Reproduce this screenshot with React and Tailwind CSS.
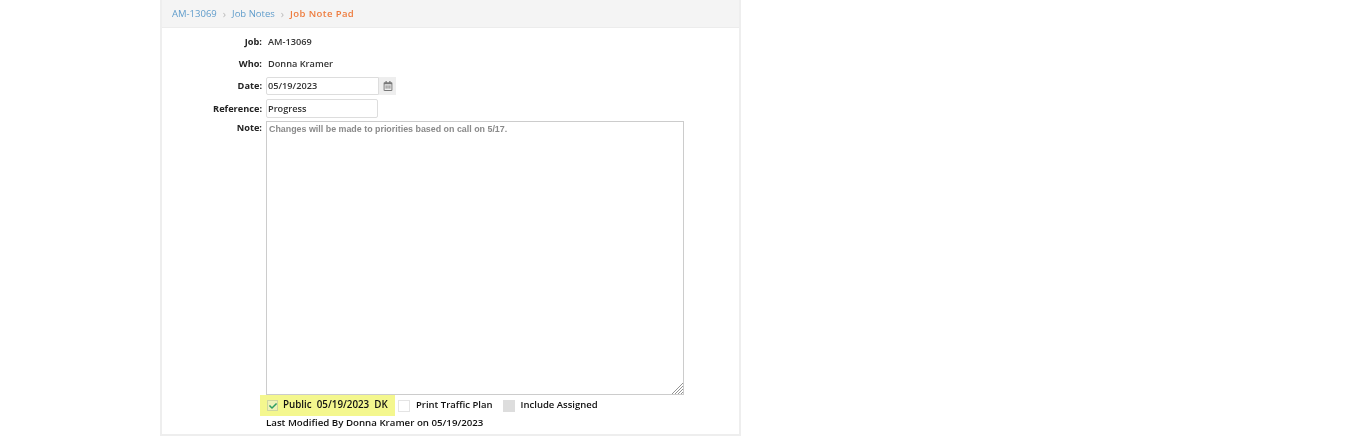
import { FaRegCalendarAlt, FaCheck } from 'react-icons/fa';

function Row({ label, children, className = '' }) {
  return (
    <div className={`flex items-center ${className}`}>
      <span className="w-[100px] shrink-0 text-right text-[9.2px] font-bold text-[#222]">{label}</span>
      {children}
    </div>
  );
}

export default function App() {
  return (
    <div className="h-[447px] w-[1371px] bg-white font-['Open_Sans',sans-serif] blur-[0.3px]">
      <div className="ml-[160px] h-[436px] w-[581px] border-x-2 border-b-2 border-[#eeeeee]">
        <div className="flex h-[28px] items-center gap-[6px] border-b border-[#ececec] bg-[#f4f4f4] pt-[2px] pl-[10px] text-[9.5px]">
          <span className="text-[#5f9ccb]">AM-13069</span>
          <span className="text-[11px] text-[#bbb]">›</span>
          <span className="text-[#5f9ccb]">Job Notes</span>
          <span className="text-[11px] text-[#bbb]">›</span>
          <span className="font-semibold tracking-[0.4px] text-[#ee7c3e]">Job Note Pad</span>
        </div>

        <Row label="Job:" className="mt-[4px] h-[20px]">
          <span className="ml-[6px] text-[9.2px] font-semibold text-[#333]">AM-13069</span>
        </Row>
        <Row label="Who:" className="mt-[2px] h-[20px]">
          <span className="ml-[6px] text-[9.2px] font-semibold text-[#333]">Donna Kramer</span>
        </Row>
        <Row label="Date:" className="mt-[3px] h-[18px]">
          <input
            readOnly
            value="05/19/2023"
            className="ml-[4px] h-[18px] w-[113px] rounded-l-[2px] border border-[#dddddd] pb-[1px] pl-[1px] text-[9.2px] font-semibold text-[#333] outline-none"
          />
          <span className="flex h-[18px] w-[17px] items-center justify-center bg-[#eeeeee] text-[#777]">
            <FaRegCalendarAlt size={10} />
          </span>
        </Row>
        <Row label="Reference:" className="mt-[4px] h-[19px]">
          <input
            readOnly
            value="Progress"
            className="ml-[4px] h-[19px] w-[112px] rounded-[2px] border border-[#dddddd] pb-[1px] pl-[1px] text-[9.2px] font-semibold text-[#333] outline-none"
          />
        </Row>
        <div className="mt-[3px] flex">
          <span className="w-[100px] shrink-0 text-right text-[9.2px] leading-[14px] font-bold text-[#222]">Note:</span>
          <div className="relative ml-[4px] h-[274px] w-[418px]">
            <textarea
              readOnly
              value="Changes will be made to priorities based on call on 5/17."
              className="block h-full w-full resize-none border border-[#cccccc] px-[2px] py-[1px] font-['Liberation_Sans',sans-serif] text-[8.9px] font-bold text-[#8a8a8a] outline-none"
            />
            <svg viewBox="0 0 12 12" className="absolute right-[1px] bottom-[1px] h-[12px] w-[12px]" stroke="#888" strokeWidth="0.9">
              <path d="M1 12 12 1M4 12 12 4M7 12 12 7M10 12 12 10" />
            </svg>
          </div>
        </div>

        <div className="flex h-[21px] items-center">
          <div className="ml-[98px] flex h-[21px] w-[135px] items-center bg-[#f4f78e] pl-[7px]">
            <span className="flex h-[11px] w-[11px] items-center justify-center border border-[#cfd6a0] bg-[#eef2b8] text-[#2f9e62]">
              <FaCheck size={8} />
            </span>
            <span className="ml-[5px] whitespace-pre text-[9.8px] font-semibold text-[#111]">Public  05/19/2023  DK</span>
          </div>
          <span className="ml-[3px] h-[12px] w-[12px] border border-[#e4e4e4] bg-white" />
          <span className="ml-[6px] text-[9.5px] font-semibold text-[#111]">Print Traffic Plan</span>
          <span className="ml-[10px] h-[12px] w-[12px] bg-[#dddddd]" />
          <span className="ml-[6px] text-[9.5px] font-semibold text-[#111]">Include Assigned</span>
        </div>
        <div className="ml-[104px] text-[9.7px] font-semibold text-[#111]">Last Modified By Donna Kramer on 05/19/2023</div>
      </div>
    </div>
  );
}
